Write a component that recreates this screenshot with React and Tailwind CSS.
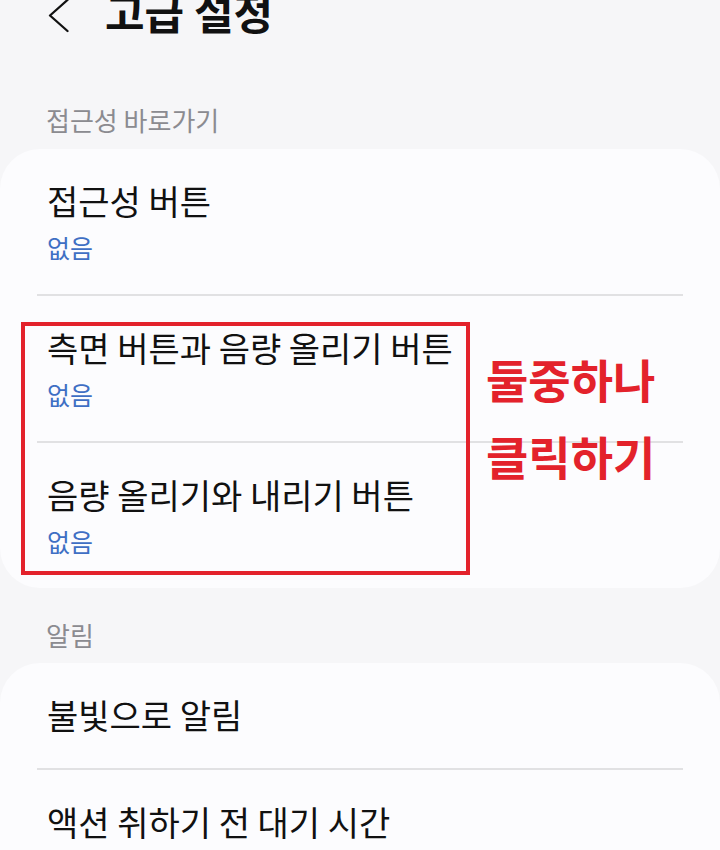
import React from "react";

const font = "font-['Noto_Sans_CJK_KR','Noto_Sans',sans-serif]";

function Divider() {
  return <div className="h-[2px] bg-[#e1e1e3]" />;
}

function Item({ title, value }) {
  return (
    <div className="pl-[10px] pt-[35px] pb-[34px]">
      <div className="text-[34px] leading-none text-[#111]">{title}</div>
      {value && (
        <div className="mt-[17px] text-[25px] leading-none text-[#3f6fc4]">{value}</div>
      )}
    </div>
  );
}

function SingleItem({ title }) {
  return (
    <div className="pl-[10px] pt-[35px] pb-[36px]">
      <div className="text-[34px] leading-none text-[#111]">{title}</div>
    </div>
  );
}

export default function App() {
  return (
    <div className={`relative h-[850px] overflow-hidden bg-[#f6f6f8] ${font}`}>
      <header className="-mt-[10px] flex h-[43px] items-start pl-[48px]">
        <svg width="21" height="43" viewBox="0 0 21 43" fill="none">
          <path d="M19.5 10 L2 25.5 L19.5 41" stroke="#111" strokeWidth="2.3" strokeLinecap="round" strokeLinejoin="round" />
        </svg>
        <h1 className="ml-[36px] text-[43px] font-bold leading-none text-[#111]">고급 설정</h1>
      </header>

      <div className="mt-[74px] pl-[46px] text-[26px] leading-none text-[#8b8b90]">접근성 바로가기</div>

      <section className="mt-[16px] rounded-[40px] bg-[#fcfcfe] px-[37px]">
        <Item title="접근성 버튼" value="없음" />
        <Divider />
        <Item title="측면 버튼과 음량 올리기 버튼" value="없음" />
        <Divider />
        <Item title="음량 올리기와 내리기 버튼" value="없음" />
      </section>

      <div className="mt-[34px] pl-[46px] text-[26px] leading-none text-[#8b8b90]">알림</div>

      <section className="mt-[15px] rounded-[40px] bg-[#fcfcfe] px-[37px] pb-[40px]">
        <SingleItem title="불빛으로 알림" />
        <Divider />
        <SingleItem title="액션 취하기 전 대기 시간" />
      </section>

      {/* annotation overlay */}
      <div className="absolute left-[21px] top-[322px] h-[253px] w-[449px] border-4 border-[#e3222b]" />
      <div className="absolute left-[486px] top-[355px] text-[46px] font-bold leading-none text-[#e3222b]">둘중하나</div>
      <div className="absolute left-[486px] top-[432px] text-[46px] font-bold leading-none text-[#e3222b]">클릭하기</div>
    </div>
  );
}
